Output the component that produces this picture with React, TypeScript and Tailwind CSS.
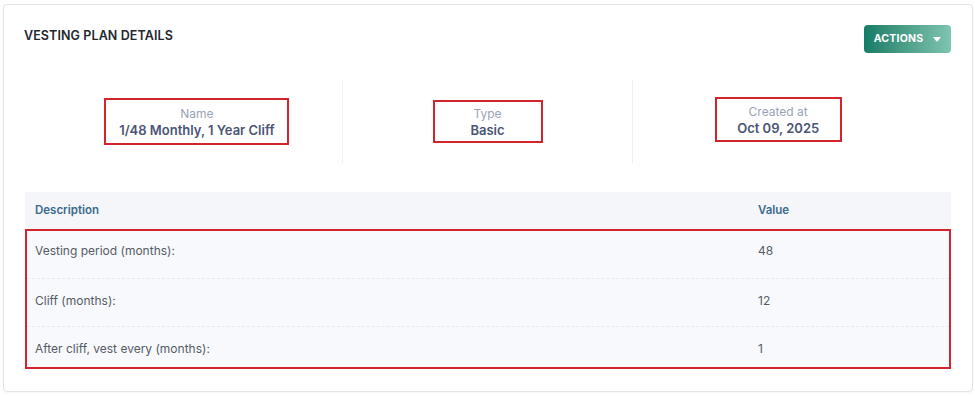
const stats = [
  { label: "Name", value: "1/48 Monthly, 1 Year Cliff", box: "w-[185px] h-[47px]" },
  { label: "Type", value: "Basic", box: "w-[110px] h-[43px]" },
  { label: "Created at", value: "Oct 09, 2025", box: "w-[127px] h-[45px] -mt-[4px]" },
];

const rows = [
  { desc: "Vesting period (months):", value: "48", h: "h-[48px] pt-[12px]" },
  { desc: "Cliff (months):", value: "12", h: "h-[48px] pt-[14px]" },
  { desc: "After cliff, vest every (months):", value: "1", h: "h-[40px] pt-[14px]" },
];

export default function App() {
  return (
    <div className="h-[396px] w-[975px] bg-white pl-[3px] pt-[4px]" style={{ fontFamily: "Inter, 'Noto Sans', sans-serif" }}>
      <div className="h-[388px] w-[970px] rounded-[4px] border border-[#e2e5e9] pl-[20px] pr-[21px] pt-[20px] shadow-[0_1px_2px_rgba(0,0,0,0.04)]">
        <div className="flex items-start justify-between">
          <h2 className="mt-[3px] text-[12.5px] font-semibold leading-[16px] tracking-[0.1px] text-[#23272e]">
            VESTING PLAN DETAILS
          </h2>
          <button className="flex h-[28px] w-[87px] items-center justify-center gap-[10px] rounded-[4px] bg-gradient-to-r from-[#127d66] to-[#7ec4b1] text-[10.5px] font-bold tracking-[0.2px] text-white">
            ACTIONS
            <svg width="8" height="5" viewBox="0 0 8 5">
              <path d="M0 0h8L4 5z" fill="#fff" />
            </svg>
          </button>
        </div>

        <div className="mt-[27px] flex h-[83px] px-[28px]">
          {stats.map((s, i) => (
            <div
              key={s.label}
              className={`flex flex-1 items-center justify-center ${i > 0 ? "border-l border-[#eceef1]" : ""}`}
            >
              <div className={`flex flex-col items-center justify-center border-2 border-[#d3232b] ${s.box}`}>
                <span className="text-[12px] leading-[17px] text-[#9aa3b6]">{s.label}</span>
                <span className="text-[13px] font-semibold leading-[17px] text-[#4a5575]">{s.value}</span>
              </div>
            </div>
          ))}
        </div>

        <div className="ml-[1px] mt-[29px] w-[926px]">
          <div className="grid h-[37px] grid-cols-[722px_1fr] items-center bg-[#f4f6f9] text-[11.5px] font-semibold text-[#3b6b8c]">
            <span className="pl-[10px]">Description</span>
            <span className="pl-[11px]">Value</span>
          </div>
          <div className="border-2 border-[#d3232b] bg-[#f8f9fc]">
            {rows.map((r, i) => (
              <div
                key={r.desc}
                className={`grid grid-cols-[720px_1fr] text-[12px] leading-[16px] text-[#555c66] ${r.h} ${
                  i < rows.length - 1 ? "border-b border-dashed border-[#e6e9ee]" : ""
                }`}
              >
                <span className="pl-[8px]">{r.desc}</span>
                <span className="pl-[11px]">{r.value}</span>
              </div>
            ))}
          </div>
        </div>
      </div>
    </div>
  );
}
